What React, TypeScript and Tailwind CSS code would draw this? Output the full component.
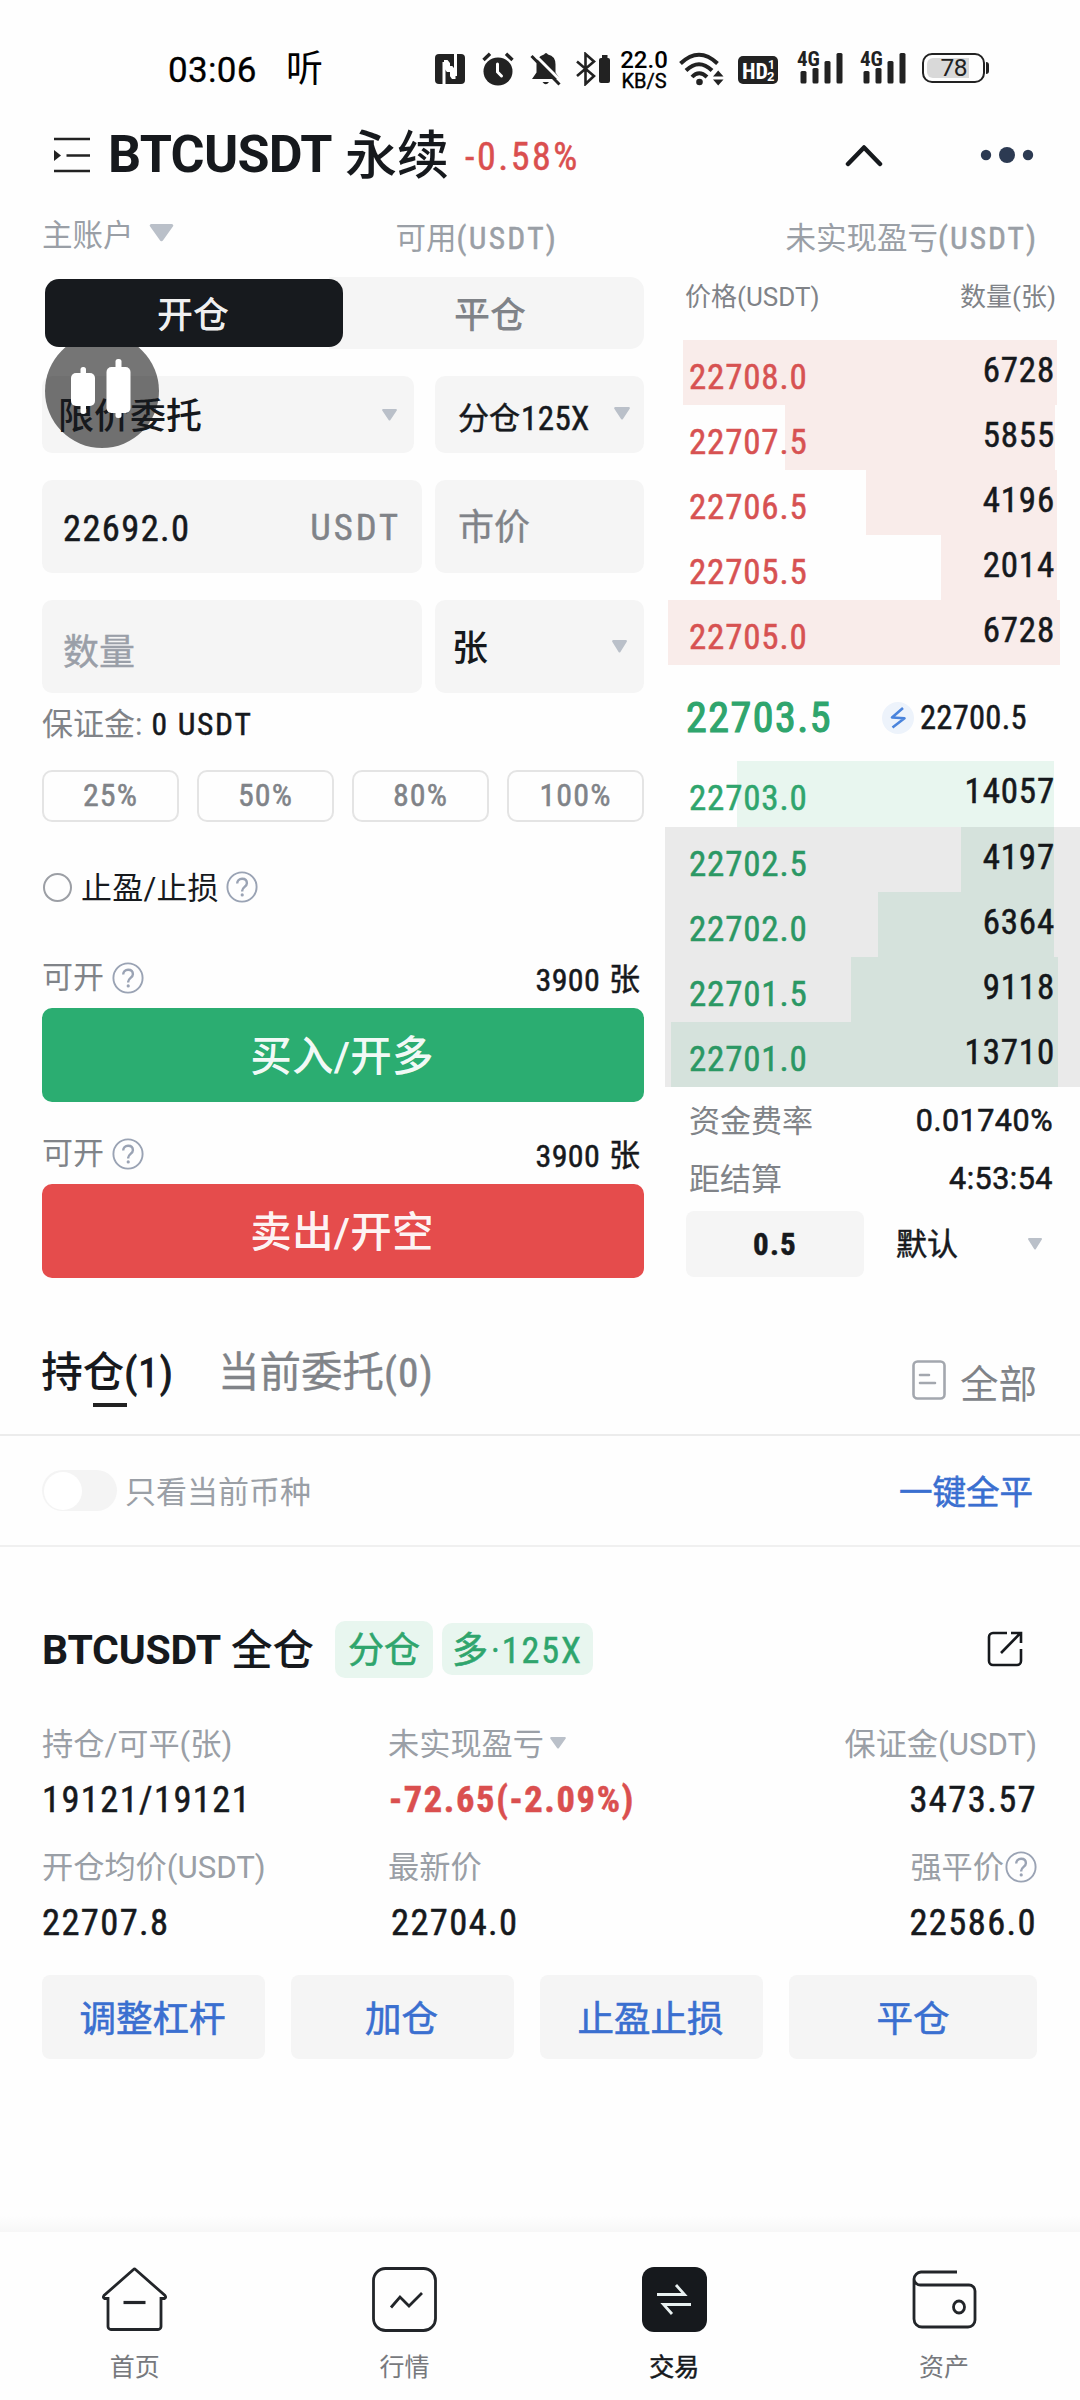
import React from "react";

/* Narrow numeric face used for prices, amounts and tickers. */
const num = "font-['Roboto_Condensed','Roboto','Noto_Sans_CJK_SC',sans-serif] [-webkit-text-stroke:0.5px]";

type Level = { price: string; amount: string; left: number; right: number };

/* Horizontal extents of the depth bars, measured inside the 415px wide book column. */
const asks: Level[] = [
  { price: "22708.0", amount: "6728", left: 18, right: 23 },
  { price: "22707.5", amount: "5855", left: 120, right: 25 },
  { price: "22706.5", amount: "4196", left: 201, right: 23 },
  { price: "22705.5", amount: "2014", left: 276, right: 23 },
  { price: "22705.0", amount: "6728", left: 3, right: 20 },
];

const bids: Level[] = [
  { price: "22703.0", amount: "14057", left: 72, right: 26 },
  { price: "22702.5", amount: "4197", left: 296, right: 26 },
  { price: "22702.0", amount: "6364", left: 213, right: 26 },
  { price: "22701.5", amount: "9118", left: 186, right: 22 },
  { price: "22701.0", amount: "13710", left: 6, right: 22 },
];

function Triangle({ className = "" }: { className?: string }) {
  return (
    <svg viewBox="0 0 16 12" preserveAspectRatio="none" className={`shrink-0 ${className}`}>
      <path d="M2 1h12L8 10.5z" fill="#bac0c9" stroke="#bac0c9" strokeWidth="2" strokeLinejoin="round" />
    </svg>
  );
}

function Help({ className = "" }: { className?: string }) {
  return (
    <svg viewBox="0 0 32 32" fill="none" stroke="#9aa3b4" className={`h-8 w-8 shrink-0 ${className}`}>
      <circle cx="16" cy="16" r="14.6" strokeWidth="1.9" />
      <path d="M11.2 12.6c0-2.9 2-4.8 4.9-4.8s4.8 1.8 4.8 4.4c0 3.6-4.7 3.7-4.7 7.6v.6" strokeWidth="2.4" />
      <circle cx="16.2" cy="23.9" r="1.6" fill="#9aa3b4" stroke="none" />
    </svg>
  );
}

function Signal({ className }: { className: string }) {
  return (
    <div className={`relative h-[33px] w-[47px] shrink-0 ${className}`}>
      <svg viewBox="0 0 47 33" className="h-[33px] w-[47px]" fill="#222">
        <rect x="3.5" y="20" width="6" height="12.5" rx="1.5" />
        <rect x="15.5" y="17" width="6" height="15.5" rx="1.5" />
        <rect x="27.5" y="10" width="6" height="22.5" rx="1.5" />
        <rect x="39.5" y="2" width="6" height="30.5" rx="1.5" />
      </svg>
      <span className="absolute left-0 top-[-5px] font-['Roboto_Condensed',sans-serif] text-[21px] font-bold leading-[26px] text-[#222]">4G</span>
    </div>
  );
}

function StatusBar() {
  return (
    <div className="flex h-[104px] items-start pt-[51px] text-black">
      <div className="ml-[168px] mt-px w-[118px] text-[35px] leading-[37px] tracking-[0.3px] [-webkit-text-stroke:0.3px]">03:06</div>
      <div className="w-[149px] text-[37px] leading-[38px]">听</div>
      <svg viewBox="0 0 30 30" className="mt-[3px] h-[30px] w-[30px] shrink-0">
        <rect width="30" height="30" rx="4" fill="#222" />
        <path d="M9 30V8M20.500 22V0" fill="none" stroke="#fff" strokeWidth="3" />
        <path d="M9 6h3.500l8 10v9H17L9 14z" fill="#fff" />
        <path d="M13.500 18v12M16.500 0v12" stroke="#222" strokeWidth="3" />
      </svg>
      <svg viewBox="0 0 32 34" className="ml-[17px] mt-px h-[34px] w-8 shrink-0">
        <ellipse cx="16" cy="19.500" rx="14.500" ry="14" fill="#222" />
        <path d="M1.500 8L8 1.800M30.500 8L24 1.800" stroke="#222" strokeWidth="3.400" />
        <path d="M15.500 12v8l4 4" stroke="#fff" strokeWidth="3" fill="none" strokeLinecap="round" />
      </svg>
      <svg viewBox="0 0 32 34" className="ml-[16px] mt-px h-[34px] w-8 shrink-0">
        <path d="M14 2.500q2-3 4 0 7.500 1.500 7.500 10v8l4.500 6.500H2l4.500-6.500v-8q0-8 7.500-10z" fill="#222" />
        <path d="M12.500 30h6.500q-3.200 4.500-6.500 0z" fill="#222" />
        <path d="M4 2l28 28" stroke="#fff" strokeWidth="3" />
        <path d="M1.500 4l28 28.500" stroke="#222" strokeWidth="3" />
      </svg>
      <svg viewBox="0 0 34 34" className="ml-[14px] mt-px h-[34px] w-[34px] shrink-0">
        <path d="M1 9.500l17 14.500-8.500 8V2l8.500 7.500L1 24" fill="none" stroke="#222" strokeWidth="2.600" />
        <rect x="23" y="6" width="11" height="25" rx="2" fill="#222" />
        <rect x="26" y="3" width="5.500" height="4" fill="#222" />
      </svg>
      <div className="-mt-[2px] ml-[9px] flex w-[50px] flex-col items-center">
        <div className="text-[24px] font-medium leading-[22px]">22.0</div>
        <div className="text-[20px] leading-[20px] [-webkit-text-stroke:0.4px]">KB/S</div>
      </div>
      <svg viewBox="0 0 46 34" className="ml-[10px] mt-px h-[34px] w-[46px] shrink-0" fill="none" stroke="#222">
        <path d="M1.500 11.500Q20-6 38.500 11.500" strokeWidth="4" />
        <path d="M7 18.500Q20 6 33 18.500" strokeWidth="4" />
        <path d="M13 25Q20 17.500 28 25" strokeWidth="4" />
        <circle cx="20.500" cy="30" r="3.300" fill="#222" stroke="none" />
        <path d="M34 24.500h10.500L39.200 18.500zM34 27.500h10.500L39.200 33.500z" fill="#222" stroke="none" />
      </svg>
      <svg viewBox="0 0 40 28" className="ml-[13px] mt-[5px] h-7 w-10 shrink-0">
        <rect width="40" height="28" rx="5" fill="#222" />
        <text x="4" y="22.500" fontFamily="Roboto Condensed, sans-serif" fontWeight="700" fontSize="22" fill="#fff">HD</text>
        <text x="30" y="13" fontFamily="Roboto, sans-serif" fontWeight="700" fontSize="12" fill="#fff">1</text>
        <text x="29" y="25" fontFamily="Roboto, sans-serif" fontWeight="700" fontSize="13" fill="#fff">2</text>
      </svg>
      <Signal className="ml-[19px]" />
      <Signal className="ml-[16px]" />
      <div className="ml-[15px] mt-[2px] flex items-center">
        <div className="flex h-[30px] w-[63px] items-center rounded-[10px] border-2 border-[#222] p-[3px]">
          <div className="flex h-full w-[42px] items-center justify-end rounded-l-[6px] bg-[#d9d9d9] pr-[2px] text-[24.500px] leading-none tracking-[-0.5px] text-[#222]">78</div>
        </div>
        <div className="ml-px h-3 w-[3px] rounded-r bg-[#222]" />
      </div>
    </div>
  );
}

function Header() {
  return (
    <div className="flex h-[102px] items-center text-[#16191d]">
      <svg viewBox="0 0 37 36" className="ml-[53px] h-9 w-[37px] shrink-0" stroke="#222" strokeWidth="2.600">
        <path d="M1 2h36M13.500 18.500H37M1 34h36" />
        <path d="M1 13v11l7-5.500z" fill="#222" stroke="none" />
      </svg>
      <div className="ml-[18px] flex items-center whitespace-nowrap">
        <span className="w-[237px] text-[52px] font-bold leading-[60px] tracking-[-0.700px]">BTCUSDT</span>
        <span className="w-[120px] pt-[3px] text-[52px] font-medium leading-[60px]">永续</span>
        <span className={`w-[380px] pt-[3px] text-[38px] leading-[60px] tracking-[2.500px] text-[#da4f4f] ${num}`}>-0.58%</span>
      </div>
      <svg viewBox="0 0 38 24" className="h-6 w-[38px] shrink-0" fill="none" stroke="#16191d" strokeWidth="4.500" strokeLinecap="round" strokeLinejoin="round">
        <path d="M3 21L19 4.500 35 21" />
      </svg>
      <svg viewBox="0 0 54 18" className="ml-[97px] h-[18px] w-[54px] shrink-0" fill="#2c3a52">
        <circle cx="6" cy="9" r="5.200" />
        <circle cx="27" cy="9" r="8" />
        <circle cx="48" cy="9" r="5.200" />
      </svg>
    </div>
  );
}

function AccountRow() {
  return (
    <div className="flex h-[66px] items-center pl-[42px] pr-[42px] text-[30.500px] leading-[40px] text-[#9a9fa6]">
      <span className="pb-[6px]">主账户</span>
      <Triangle className="mb-3 ml-[14px] h-[18px] w-[27px]" />
      <span className="ml-[221px]">
        可用<span className={`text-[31.500px] tracking-[2.300px] ${num}`}>(USDT)</span>
      </span>
      <span className="ml-auto">
        未实现盈亏<span className={`text-[31.500px] tracking-[2px] ${num}`}>(USDT)</span>
      </span>
    </div>
  );
}

function Available({ className }: { className: string }) {
  return (
    <div className={`flex h-[52px] items-center text-[31px] leading-[40px] ${className}`}>
      <span className="text-[#808388]">可开</span>
      <Help className="ml-[8px]" />
      <span className={`ml-auto pr-[9px] pt-[3px] text-[32px] tracking-[0.300px] ${num}`}>3900</span>
      <span className="pr-[4px] pt-[4px] [-webkit-text-stroke:0.5px]">张</span>
    </div>
  );
}

function OrderForm() {
  return (
    <div className="relative ml-[42px] w-[602px] shrink-0 pt-[5px]">
      <div className="absolute left-[3px] top-[62px] z-10 h-[114px] w-[114px] rounded-full bg-black/54" />
      <svg viewBox="0 0 60 60" className="absolute left-[29px] top-[87px] z-30 h-[60px] w-[60px]" fill="#fff">
        <rect y="14" width="24" height="33" rx="5" />
        <rect x="9.500" y="8" width="5.500" height="47" rx="2.500" />
        <rect x="35.500" y="8" width="24" height="46" rx="5" />
        <rect x="44.500" width="6" height="59" rx="2.500" />
      </svg>

      <div className="relative z-40 flex h-[72px] rounded-[14px] text-[36px] font-medium leading-[74px]">
        <div className="my-[2px] ml-[3px] h-[68px] w-[298px] rounded-[14px] bg-[#171a1e] pr-3 text-center text-white/95">
          <span className="pl-[10px]">开仓</span>
        </div>
        <div className="-ml-[14px] -z-10 flex-1 rounded-r-[14px] bg-[#f5f5f5] pt-[2px] text-center text-[#808388]">
          <span className="pl-[7px]">平仓</span>
        </div>
      </div>

      <div className="mt-[27px] flex h-[77px] justify-between">
        <div className="flex w-[372px] items-center justify-between rounded-[10px] bg-[#f5f5f5] pl-[16px] pr-[16px]">
          <span className="relative z-20 pt-[4px] text-[36px] font-medium leading-[50px]">限价委托</span>
          <Triangle className="h-3 w-[17px]" />
        </div>
        <div className="flex w-[209px] items-center rounded-[10px] bg-[#f5f5f5] pl-[23px] pr-[13px]">
          <span className="pt-[9px] text-[31px] leading-[40px] [-webkit-text-stroke:0.5px]">分仓</span>
          <span className={`ml-px pt-[8px] text-[33px] leading-[40px] tracking-[0.4px] ${num}`}>125X</span>
          <Triangle className="mb-[2px] ml-auto h-[13px] w-[18px]" />
        </div>
      </div>

      <div className="mt-[27px] flex h-[93px] items-center justify-between">
        <div className="flex h-full w-[380px] items-center justify-between rounded-[10px] bg-[#f5f5f5] pl-[21px] pr-[21px] text-[36.500px]">
          <span className={`pt-[6px] tracking-[1.400px] ${num}`}>22692.0</span>
          <span className={`pt-[3px] tracking-[3px] text-[#808388] ${num}`}>USDT</span>
        </div>
        <div className="flex h-full w-[209px] items-center rounded-[10px] bg-[#f5f5f5] pl-[23px] pt-[3px] text-[36px] text-[#808388] [-webkit-text-stroke:0.4px]">市价</div>
      </div>

      <div className="mt-[27px] flex h-[93px] items-center justify-between">
        <div className="flex h-full w-[380px] items-center rounded-[10px] bg-[#f5f5f5] pl-[21px] pt-[12px] text-[36px] text-[#9a9fa8] [-webkit-text-stroke:0.4px]">数量</div>
        <div className="flex h-full w-[209px] items-center justify-between rounded-[10px] bg-[#f5f5f5] pl-[17px] pr-[16px] text-[36px] font-medium">
          <span className="pt-[4px]">张</span>
          <Triangle className="h-[13px] w-[17px]" />
        </div>
      </div>

      <div className="flex h-[62px] items-center pt-[2px] text-[31px] leading-[40px]">
        <span className="text-[#808388]">保证金:</span>
        <span className={`ml-[9px] text-[31.500px] tracking-[1.700px] ${num}`}>0 USDT</span>
      </div>

      <div className="mt-[15px] grid h-[52px] grid-cols-4 gap-[18px]">
        {["25%", "50%", "80%", "100%"].map((p) => (
          <div key={p} className={`flex items-center justify-center rounded-[10px] border-2 border-[#e4e4e4] pb-[2px] text-[32px] leading-[40px] tracking-[1.100px] text-[#808388] ${num}`}>
            {p}
          </div>
        ))}
      </div>

      <div className="flex h-[130px] items-center text-[31px] leading-[40px]">
        <div className="ml-px h-[29px] w-[29px] rounded-full border-2 border-[#9c9fa5]" />
        <span className="ml-[9px] pt-[3px] tracking-[0.200px]">止盈/止损</span>
        <Help className="ml-[7px]" />
      </div>

      <Available className="" />
      <div className="mt-1 h-[94px] rounded-[10px] bg-[#2bad71] pr-[2px] text-center text-[41.500px] font-medium leading-[98px] tracking-[0.300px] text-white/95">买入/开多</div>
      <Available className="mt-[26px]" />
      <div className="mt-1 h-[94px] rounded-[10px] bg-[#e54c4c] pr-[2px] text-center text-[41.500px] font-medium leading-[98px] tracking-[0.300px] text-white/95">卖出/开空</div>
    </div>
  );
}

function BookRow({ level, bar, color, height }: { level: Level; bar: string; color: string; height: string }) {
  return (
    <div className={`relative ${height}`}>
      <div className={`absolute inset-y-0 ${bar}`} style={{ left: level.left, right: level.right }} />
      <div className={`relative flex items-start justify-between pl-[24px] pr-[25px] text-[35px] leading-[42px] tracking-[0.800px] ${num}`}>
        <span className={`pt-[17px] ${color}`}>{level.price}</span>
        <span className="pt-[10px]">{level.amount}</span>
      </div>
    </div>
  );
}

function OrderBook() {
  return (
    <div className="ml-[21px] flex-1">
      <div className="flex h-[50px] items-center justify-between pl-[20px] pr-[24px] text-[26px] leading-[40px] text-[#808388]">
        <span>价格(USDT)</span>
        <span>数量(张)</span>
      </div>
      <div className="mt-[18px]">
        {asks.map((l) => (
          <BookRow key={l.price} level={l} bar="bg-[#f9ecea]" color="text-[#d75252]" height="h-[65px]" />
        ))}
      </div>
      <div className={`flex h-[96px] items-center pl-[21px] pt-[10px] ${num}`}>
        <span className="w-[196px] text-[42px] leading-[50px] tracking-[1.500px] text-[#2fa56d] [-webkit-text-stroke:1.200px]">22703.5</span>
        <svg viewBox="0 0 32 32" className="h-8 w-8 shrink-0">
          <circle cx="16" cy="16" r="16" fill="#edf3fb" />
          <path d="M21 6L10 15.500l12.500 .8L10.500 25.500" fill="none" stroke="#4a84dc" strokeWidth="2.600" strokeLinejoin="round" />
        </svg>
        <span className="ml-[6px] text-[32.500px] leading-[40px] tracking-[0.300px]">22700.5</span>
      </div>
      <div className="relative">
        {bids.map((l, i) => (
          <BookRow key={l.price} level={l} bar="bg-[#e8f6ef]" color="text-[#2fa56d]" height={i === 0 ? "h-[66px]" : "h-[65px]"} />
        ))}
        <div className="absolute inset-x-0 bottom-0 top-[66px] bg-black/8" />
      </div>
      <div className="mt-[5px] flex h-[58px] items-center justify-between pl-[24px] pr-[27px] text-[31px] leading-[40px]">
        <span className="pt-[2px] text-[#808388]">资金费率</span>
        <span className="text-[30.500px] [-webkit-text-stroke:0.6px] tracking-[0.500px]">0.01740%</span>
      </div>
      <div className="flex h-[58px] items-center justify-between pl-[24px] pr-[27px] text-[31px] leading-[40px]">
        <span className="pt-[2px] text-[#808388]">距结算</span>
        <span className="text-[30.500px] [-webkit-text-stroke:0.6px] tracking-[0.500px]">4:53:54</span>
      </div>
      <div className="mt-[3px] flex h-[66px] items-center pl-[21px]">
        <div className={`flex h-full w-[178px] items-center justify-center rounded-[8px] bg-[#f5f5f5] pt-[2px] text-[31px] font-bold tracking-[1.200px] ${num}`}>0.5</div>
        <span className="ml-[32px] pt-[2px] text-[31px] [-webkit-text-stroke:0.5px]">默认</span>
        <Triangle className="ml-[69px] h-3 w-[16px]" />
      </div>
    </div>
  );
}

function PositionTabs() {
  return (
    <div className="flex h-[126px] border-b-2 border-[#ececec] pl-[42px] pr-[43px]">
      <div className="flex w-[131px] flex-col items-center pt-[43px]">
        <div className="whitespace-nowrap text-[41.500px] font-medium leading-[40px]">
          持仓<span className={`font-normal tracking-[1px] [-webkit-text-stroke:1px] ${num}`}>(1)</span>
        </div>
        <div className="ml-[4px] mt-[10px] h-1 w-[34px] bg-[#222]" />
      </div>
      <div className="ml-[45px] pt-[43px] text-[41.500px] leading-[40px] text-[#808388] [-webkit-text-stroke:0.300px]">
        当前委托<span className={`tracking-[1px] ${num}`}>(0)</span>
      </div>
      <svg viewBox="0 0 34 40" className="ml-auto mt-[50px] h-10 w-[34px] shrink-0" fill="none" stroke="#a3a7ae" strokeWidth="2.600">
        <rect x="1.500" y="1.500" width="31" height="37" rx="4" />
        <path d="M8 15h9M8 23h15" strokeLinecap="round" />
      </svg>
      <span className="ml-[14px] pt-[55px] text-[38.500px] leading-[40px] text-[#808388]">全部</span>
    </div>
  );
}

function FilterRow() {
  return (
    <div className="flex h-[111px] items-center border-b-2 border-[#f0f0f0] pl-[42px] pr-[47px]">
      <div className="flex h-[41px] w-[75px] items-center rounded-full bg-[#f4f4f4] pl-[2px]">
        <div className="h-[38px] w-[38px] rounded-full bg-white" />
      </div>
      <span className="ml-[8px] pt-[4px] text-[31px] leading-[40px] text-[#9a9fa6]">只看当前币种</span>
      <span className="ml-auto pt-[4px] text-[33.500px] leading-[40px] text-[#3a6fd0] [-webkit-text-stroke:0.6px]">一键全平</span>
    </div>
  );
}

function Position() {
  return (
    <div className="pl-[42px] pr-[43px] pt-[60px]">
      <div className="flex h-[84px] items-center whitespace-nowrap">
        <span className="w-[189px] pt-[3px] text-[41px] font-bold tracking-[-0.200px]">BTCUSDT</span>
        <span className="w-[104px] pt-[5px] text-[41.500px] font-medium">全仓</span>
        <span className="flex h-[57px] w-[98px] items-center justify-center rounded-[10px] bg-[#e8f6ef] pt-[3px] text-[36px] text-[#2fa56d] [-webkit-text-stroke:0.6px]">分仓</span>
        <span className="ml-[9px] flex h-[52px] w-[151px] items-center justify-center rounded-[10px] bg-[#e8f6ef] pt-[3px] text-[36px] text-[#2fa56d]">
          <span className="[-webkit-text-stroke:0.6px]">多</span>
          <span className={`pl-[3px] text-[36px] tracking-[2px] ${num}`}>·125X</span>
        </span>
        <svg viewBox="0 0 36 36" className="ml-auto mr-[14px] h-9 w-9 shrink-0" fill="none" stroke="#16191d" strokeWidth="2.600">
          <path d="M20 2H6a4 4 0 0 0-4 4v24a4 4 0 0 0 4 4h24a4 4 0 0 0 4-4V18" />
          <path d="M14 22L33 2.500M24 2h10v10" />
        </svg>
      </div>

      <div className="mt-[28px] flex h-[50px] items-center pt-[2px] text-[31.200px] leading-[40px] text-[#9a9fa6]">
        <span className="w-[346px]">持仓/可平(张)</span>
        <span>未实现盈亏</span>
        <Triangle className="mb-[4px] ml-[5px] h-3 w-[18px]" />
        <span className="ml-auto">保证金(USDT)</span>
      </div>
      <div className={`mt-[2px] flex h-[56px] items-center pt-[2px] text-[36.500px] leading-[40px] tracking-[1.400px] ${num}`}>
        <span className="w-[347px]">19121/19121</span>
        <span className="font-bold tracking-[1.600px] text-[#da4f4f]">-72.65(-2.09%)</span>
        <span className="ml-auto">3473.57</span>
      </div>
      <div className="mt-[15px] flex h-[50px] items-center pt-[2px] text-[31.200px] leading-[40px] text-[#9a9fa6]">
        <span className="w-[346px]">开仓均价(USDT)</span>
        <span>最新价</span>
        <span className="ml-auto">强平价</span>
        <Help className="mb-[2px] ml-px" />
      </div>
      <div className={`mt-[2px] flex h-[56px] items-center pt-[2px] text-[36.500px] leading-[40px] tracking-[1.400px] ${num}`}>
        <span className="w-[349px]">22707.8</span>
        <span>22704.0</span>
        <span className="ml-auto">22586.0</span>
      </div>

      <div className="mt-[25px] flex h-[84px] gap-[26px] text-[36.500px] text-[#3a6fd0] [-webkit-text-stroke:0.6px]">
        {["调整杠杆", "加仓", "止盈止损"].map((t) => (
          <div key={t} className="flex w-[223px] items-center justify-center rounded-[8px] bg-[#f5f5f5] pr-[2px] pt-[6px]">{t}</div>
        ))}
        <div className="flex flex-1 items-center justify-center rounded-[8px] bg-[#f5f5f5] pt-[6px]">平仓</div>
      </div>
    </div>
  );
}

const navItems: { label: string; active?: boolean; icon: React.ReactNode }[] = [
  {
    label: "首页",
    icon: (
      <>
        <path d="M7 32.500v28a3 3 0 0 0 3 3h47a3 3 0 0 0 3-3v-28h3.500q2-1 .5-3L34.500 3.500Q33.500 2.500 32.500 3.500L3 29.500q-1.500 2 .5 3z" />
        <path d="M22.500 36.500h22" strokeWidth="3.200" />
      </>
    ),
  },
  {
    label: "行情",
    icon: (
      <>
        <rect x="2.500" y="2.500" width="62" height="62" rx="12" />
        <path d="M20 41.500l9-10.500 9 9L51 27" />
      </>
    ),
  },
  {
    label: "交易",
    active: true,
    icon: (
      <>
        <rect x="1" y="1" width="65" height="65" rx="12" fill="#16191d" stroke="none" />
        <path d="M16 28.500h27.500L35 19M50 38.500H22.500L31 48" stroke="#e9f1f1" />
      </>
    ),
  },
  {
    label: "资产",
    icon: (
      <>
        <path d="M46 6H10a7.500 7.500 0 0 0-7 7v40a8 8 0 0 0 8 8h46a7 7 0 0 0 7-7V25a6 6 0 0 0-6-6H10a6.500 6.500 0 0 1-7-6" />
        <ellipse cx="48" cy="41" rx="5.500" ry="6" />
      </>
    ),
  },
];

function BottomNav() {
  return (
    <div className="mt-auto">
      <div className="h-4 bg-gradient-to-b from-[#fefefe] to-[#f7f7f7]" />
      <div className="grid h-[168px] grid-cols-4 bg-[#fefefe] pr-px pt-[34px]">
        {navItems.map((n) => (
          <div key={n.label} className="flex flex-col items-center text-[25px]">
            <svg viewBox="0 0 67 67" className="h-[67px] w-[67px]" fill="none" stroke="#222529" strokeWidth="2.800">
              {n.icon}
            </svg>
            <span className={n.active ? "mt-[15px] leading-[40px] [-webkit-text-stroke:0.5px]" : "mt-[15px] leading-[40px] text-[#77797d]"}>{n.label}</span>
          </div>
        ))}
      </div>
    </div>
  );
}

export default function App() {
  return (
    <div className="flex h-[2400px] w-[1080px] flex-col overflow-hidden bg-[#fefefe] font-['Roboto','Noto_Sans_CJK_SC',sans-serif] text-[#16191d]">
      <StatusBar />
      <Header />
      <AccountRow />
      <div className="flex h-[1038px]">
        <OrderForm />
        <OrderBook />
      </div>
      <PositionTabs />
      <FilterRow />
      <Position />
      <BottomNav />
    </div>
  );
}
